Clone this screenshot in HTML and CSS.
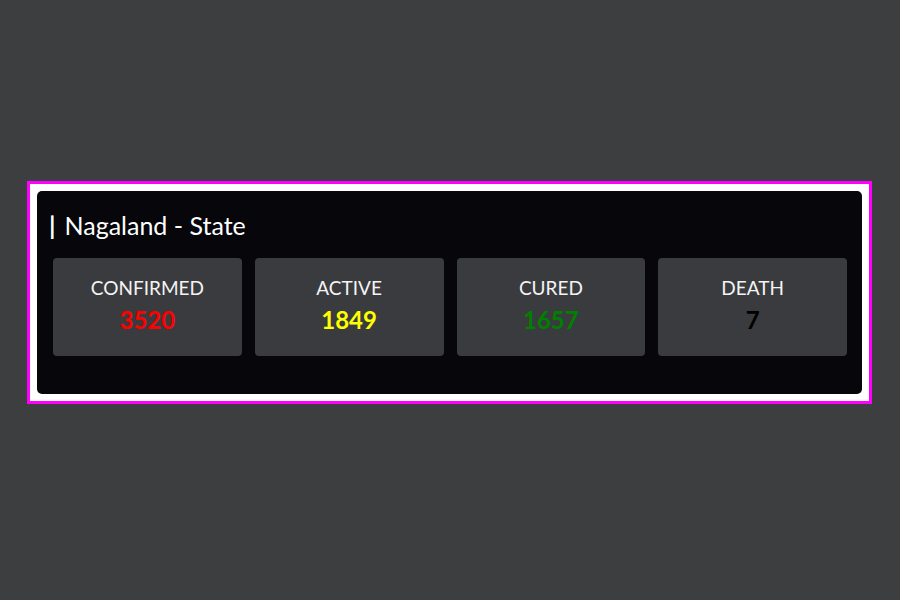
FILE: index.html
```html
<!DOCTYPE html>
<html>

<head>
    <title>Nagaland - State</title>
    <meta charset="utf-8" />
    <meta name="viewport" content="width=device-width, initial-scale=1.0" />
    <link rel="stylesheet" href="styles.css">
</head>

<body>
    <div class="page">
        <div class="frame">
            <div class="state-box">
                <div class="state-title"><span class="bar">|</span>Nagaland - State</div>
                <div class="stat-list">
                    <div class="stat-item">
                        <div class="stat-label">CONFIRMED</div>
                        <div class="stat-num confirmed">3520</div>
                    </div>
                    <div class="stat-item">
                        <div class="stat-label">ACTIVE</div>
                        <div class="stat-num active">1849</div>
                    </div>
                    <div class="stat-item">
                        <div class="stat-label">CURED</div>
                        <div class="stat-num cured">1657</div>
                    </div>
                    <div class="stat-item">
                        <div class="stat-label">DEATH</div>
                        <div class="stat-num death">7</div>
                    </div>
                </div>
            </div>
        </div>
    </div>
</body>

</html>
```

FILE: styles.css
```css
html,
body {
    width: 100%;
    height: 100%;
    margin: 0;
}

body {
    background-color: #3d3e40;
    font-family: Lato, "Open Sans", sans-serif;
}

.page {
    padding-top: 181px;
    padding-left: 27px;
}

.frame {
    width: 825px;
    padding: 7px;
    border: 3px solid #ff00ff;
    background-color: #fff;
}

.state-box {
    background-color: #06060b;
    border-radius: 5px;
    padding: 19px 15px 38px 16px;
}

.state-title {
    color: #fff;
    font-size: 25px;
    line-height: 30px;
    margin-left: -4px;
    margin-bottom: 18px;
}

.state-title .bar {
    font-weight: bold;
    margin-right: 9px;
}

.stat-list {
    display: grid;
    grid-template-columns: repeat(4, 1fr);
    gap: 13px;
}

.stat-item {
    background-color: #3a3b3e;
    border-radius: 4px;
    padding: 19px 0 22px;
    text-align: center;
}

.stat-label {
    color: #f4f4f4;
    font-size: 19px;
    line-height: 22px;
}

.stat-num {
    margin-top: 7px;
    font-size: 24px;
    font-weight: bold;
    line-height: 28px;
}

.confirmed {
    color: #ff0000;
}

.active {
    color: #ffff00;
}

.cured {
    color: #008000;
}

.death {
    color: #000;
}
```
